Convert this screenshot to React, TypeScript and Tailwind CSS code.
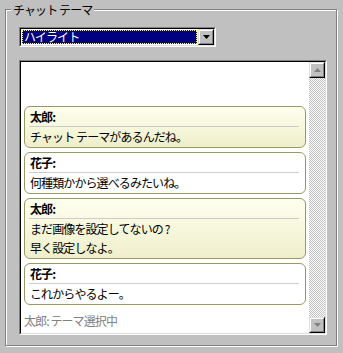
type Message = {
  name: string;
  lines: string[];
  own: boolean;
};

const messages: Message[] = [
  { name: '太郎:', lines: ['チャット テーマがあるんだね。'], own: true },
  { name: '花子:', lines: ['何種類かから選べるみたいね。'], own: false },
  { name: '太郎:', lines: ['まだ画像を設定してないの ?', '早く設定しなよ。'], own: true },
  { name: '花子:', lines: ['これからやるよー。'], own: false },
];

const font = "font-['Noto_Sans_CJK_JP','Noto_Sans',sans-serif] text-[12px] tracking-[-0.9px]";

function ScrollButton({ up }: { up: boolean }) {
  return (
    <div className="h-[16px] w-[16px] border border-t-[#dfdfdf] border-l-[#dfdfdf] border-r-black border-b-black bg-[#c0c0c0]">
      <div className="flex h-full w-full items-center justify-center border border-t-white border-l-white border-r-[#808080] border-b-[#808080]">
        <svg width="7" height="4" viewBox="0 0 7 4" className="block">
          {up ? (
            <polygon points="3.5,0 7,4 0,4" fill="#808080" />
          ) : (
            <polygon points="0,0 7,0 3.5,4" fill="#808080" />
          )}
        </svg>
      </div>
    </div>
  );
}

function Bubble({ msg }: { msg: Message }) {
  return (
    <div
      className={`rounded-[6px] border border-[#999966] pb-[1px] pt-[1px] ${
        msg.own ? 'bg-gradient-to-b from-[#ffffef] to-[#efefcb]' : 'bg-white'
      }`}
    >
      <p className="pl-[5px] font-bold leading-[18px] text-black">{msg.name}</p>
      <div className="ml-[4px] mr-[6px] h-px bg-[#cccccc]" />
      {msg.lines.map((line) => (
        <p key={line} className="pl-[5px] leading-[19px] text-black">
          {line}
        </p>
      ))}
    </div>
  );
}

export default function App() {
  return (
    <div className={`h-[353px] w-[343px] overflow-hidden bg-[#c0c0c0] pl-[5px] pt-[9px] ${font}`}>
      {/* グループ枠 */}
      <div className="relative h-[337px] w-[332px] border border-[#808080] shadow-[1px_1px_0_#ffffff,inset_1px_1px_0_#ffffff]">
        <span className="absolute -top-[8px] left-[5px] bg-[#c0c0c0] px-[2px] leading-[16px] text-black">
          チャット テーマ
        </span>

        <div className="pl-[13px] pt-[17px]">
          {/* テーマ選択 */}
          <div className="h-[20px] w-[197px] border border-t-[#808080] border-l-[#808080] border-r-white border-b-white">
            <div className="flex h-full w-full border border-t-black border-l-black border-r-[#dfdfdf] border-b-[#dfdfdf] bg-white">
              <div className="flex-1 p-[1px]">
                <div className="h-full bg-[#000080]">
                  <div className="flex h-full items-center border border-dotted border-[#ffff66] pl-[1px] leading-[12px] text-white">
                    ハイライト
                  </div>
                </div>
              </div>
              <div className="h-[16px] w-[16px] border border-t-[#dfdfdf] border-l-[#dfdfdf] border-r-black border-b-black bg-[#c0c0c0]">
                <div className="flex h-full w-full items-center justify-center border border-t-white border-l-white border-r-[#808080] border-b-[#808080]">
                  <svg width="7" height="4" viewBox="0 0 7 4" className="block">
                    <polygon points="0,0 7,0 3.5,4" fill="#000000" />
                  </svg>
                </div>
              </div>
            </div>
          </div>

          {/* チャット表示 */}
          <div className="mt-[13px] h-[275px] w-[308px] border border-t-[#808080] border-l-[#808080] border-r-white border-b-white">
            <div className="flex h-full w-full border border-t-black border-l-black border-r-[#dfdfdf] border-b-[#dfdfdf] bg-white">
              <div className="flex flex-1 flex-col gap-[4px] pl-[3px] pr-[3px] pt-[44px]">
                {messages.map((m, i) => (
                  <Bubble key={i} msg={m} />
                ))}
                <p className="pt-[3px] leading-[18px] text-[#808080]">太郎: テーマ選択中</p>
              </div>
              <div className="flex w-[16px] flex-col bg-[repeating-conic-gradient(#c0c0c0_0%_25%,#ffffff_0%_50%)] bg-[length:2px_2px]">
                <ScrollButton up />
                <div className="flex-1" />
                <ScrollButton up={false} />
              </div>
            </div>
          </div>
        </div>
      </div>
    </div>
  );
}
